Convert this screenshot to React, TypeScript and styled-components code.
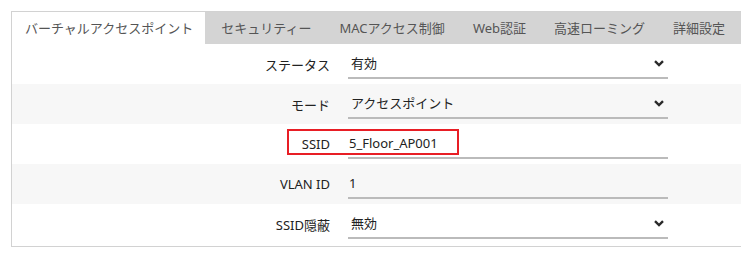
import React from "react";
import styled, { createGlobalStyle } from "styled-components";

const GlobalStyle = createGlobalStyle`
  body {
    margin: 0;
    background: #fff;
    font-family: "Noto Sans", "Noto Sans CJK JP", sans-serif;
    font-size: 13px;
    color: #222;
  }
`;

const Page = styled.div`
  padding: 11px 0 0 11px;
  width: 741px;
  height: 260px;
  box-sizing: border-box;
  overflow: hidden;
`;

const Panel = styled.div`
  width: 760px;
  border: 1px solid #d2d2d2;
  border-right: none;
`;

const TabBar = styled.div`
  display: flex;
  height: 32px;
  background: #d4d4d4;
`;

const Tab = styled.div<{ $active?: boolean }>`
  padding: 0 12px 0 13px;
  margin-right: 3px;
  line-height: 32px;
  white-space: nowrap;
  color: #555;
  background: ${(p) => (p.$active ? "#fff" : "transparent")};
`;

const Form = styled.div`
  padding-bottom: 2px;
`;

const Row = styled.div<{ $shaded?: boolean }>`
  position: relative;
  display: grid;
  grid-template-columns: 318px 320px;
  column-gap: 18px;
  align-items: center;
  height: 40px;
  background: ${(p) => (p.$shaded ? "#f7f7f7" : "#fff")};
`;

const Label = styled.label`
  text-align: right;
  color: #222;
`;

const Field = styled.div`
  position: relative;
  height: 30px;
  border-bottom: 2px solid #bbb;
  box-sizing: border-box;
`;

const Select = styled.select`
  appearance: none;
  width: 100%;
  height: 100%;
  border: none;
  background: transparent;
  padding: 0 0 0 3px;
  font: inherit;
  color: #222;
  outline: none;
`;

const TextInput = styled.input`
  width: 100%;
  height: 100%;
  border: none;
  background: transparent;
  padding: 0 0 0 1px;
  font: inherit;
  color: #222;
  outline: none;
  box-sizing: border-box;
`;

const Chevron = styled.svg`
  position: absolute;
  right: 4px;
  top: 11px;
  pointer-events: none;
`;

const Highlight = styled.div`
  position: absolute;
  left: 275px;
  top: 5px;
  width: 172px;
  height: 26px;
  border: 2px solid #e81e25;
  box-sizing: border-box;
  pointer-events: none;
`;

const tabs = [
  "バーチャルアクセスポイント",
  "セキュリティー",
  "MACアクセス制御",
  "Web認証",
  "高速ローミング",
  "詳細設定",
];

function SelectField({ value, options }: { value: string; options: string[] }) {
  return (
    <Field>
      <Select defaultValue={value}>
        {options.map((o) => (
          <option key={o}>{o}</option>
        ))}
      </Select>
      <Chevron width="10" height="7" viewBox="0 0 10 7">
        <polyline points="1,1.2 5,5 9,1.2" fill="none" stroke="#2a2a2a" strokeWidth="2.4" />
      </Chevron>
    </Field>
  );
}

function InputField({ value }: { value: string }) {
  return (
    <Field>
      <TextInput defaultValue={value} />
    </Field>
  );
}

export default function App() {
  return (
    <Page>
      <GlobalStyle />
      <Panel>
        <TabBar>
          {tabs.map((t, i) => (
            <Tab key={t} $active={i === 0}>
              {t}
            </Tab>
          ))}
        </TabBar>
        <Form>
          <Row>
            <Label>ステータス</Label>
            <SelectField value="有効" options={["有効", "無効"]} />
          </Row>
          <Row $shaded>
            <Label>モード</Label>
            <SelectField value="アクセスポイント" options={["アクセスポイント", "ブリッジ"]} />
          </Row>
          <Row>
            <Label>SSID</Label>
            <InputField value="5_Floor_AP001" />
            <Highlight />
          </Row>
          <Row $shaded>
            <Label>VLAN ID</Label>
            <InputField value="1" />
          </Row>
          <Row>
            <Label>SSID隠蔽</Label>
            <SelectField value="無効" options={["有効", "無効"]} />
          </Row>
        </Form>
      </Panel>
    </Page>
  );
}
